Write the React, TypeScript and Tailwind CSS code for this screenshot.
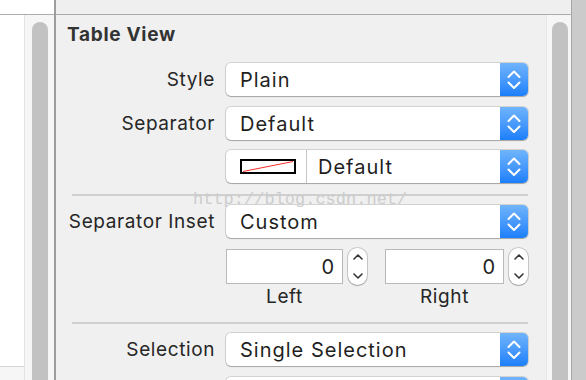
import type { ReactNode } from 'react';

function Chevrons() {
  return (
    <svg width="14" height="22" viewBox="0 0 14 22" fill="none">
      <polyline points="1.5,8 7,2.5 12.5,8" stroke="white" strokeWidth="2" strokeLinecap="round" strokeLinejoin="round" />
      <polyline points="1.5,13.5 7,19 12.5,13.5" stroke="white" strokeWidth="2" strokeLinecap="round" strokeLinejoin="round" />
    </svg>
  );
}

function Popup({ children, plain = true }: { children: ReactNode; plain?: boolean }) {
  return (
    <div className="flex h-[33px] w-full rounded-[5px] bg-white shadow-[0_0_0_1px_rgba(0,0,0,0.12),0_1px_1px_rgba(0,0,0,0.22)]">
      {plain ? (
        <div className="flex flex-1 items-center pl-[14px] text-[20px] tracking-[1px] text-[#1f1f1f]">{children}</div>
      ) : (
        <div className="flex flex-1 items-center">{children}</div>
      )}
      <div className="flex w-[28px] items-center justify-center rounded-r-[5px] bg-linear-to-b from-[#6fb4fb] to-[#1a7ffa]">
        <Chevrons />
      </div>
    </div>
  );
}

function Row({ label, children }: { label: string; children: ReactNode }) {
  return (
    <div className="grid grid-cols-[148px_302px] items-center gap-x-[11px]">
      <div className="whitespace-nowrap pt-px text-right text-[19px] leading-[24px] tracking-[0.6px] text-[#262626]">{label}</div>
      {children}
    </div>
  );
}

function Stepper() {
  return (
    <div className="flex h-[37px] w-[19px] flex-col items-center justify-between rounded-full bg-white py-[6px] shadow-[0_0_0_1px_rgba(0,0,0,0.16),0_1px_1px_rgba(0,0,0,0.2)]">
      <svg width="10" height="6" viewBox="0 0 10 6" fill="none">
        <polyline points="1,5 5,1 9,5" stroke="#333" strokeWidth="1.6" strokeLinecap="round" strokeLinejoin="round" />
      </svg>
      <svg width="10" height="6" viewBox="0 0 10 6" fill="none">
        <polyline points="1,1 5,5 9,1" stroke="#333" strokeWidth="1.6" strokeLinecap="round" strokeLinejoin="round" />
      </svg>
    </div>
  );
}

function NumberField({ label }: { label: string }) {
  return (
    <div className="flex flex-col">
      <div className="flex items-center gap-[5px]">
        <div className="flex h-[35px] flex-1 items-center justify-end border border-[#b9b9b9] bg-white pr-[8px] text-[20px] text-[#1f1f1f]">
          0
        </div>
        <Stepper />
      </div>
      <div className="pr-[24px] text-center text-[19px] leading-[24px] tracking-[0.6px] text-[#262626]">{label}</div>
    </div>
  );
}

function ScrollStrip({ side }: { side: 'left' | 'right' }) {
  return (
    <div
      className={`flex h-full shrink-0 bg-[#f6f6f6] pt-[7px] ${
        side === 'left' ? 'w-[30px] border-l border-[#e4e4e4] pl-[7px]' : 'w-[25px] border-l border-[#e6e6e6] pl-[5px]'
      }`}
    >
      <div className="h-full w-[16px] rounded-t-full bg-[#c2c2c2]" />
    </div>
  );
}

export default function App() {
  return (
    <div
      className="relative flex h-[380px] w-[586px] overflow-hidden bg-[#f0f0f0]"
      style={{ fontFamily: 'Inter, "Noto Sans", "Liberation Sans", sans-serif' }}
    >
      {/* left column */}
      <div className="flex w-[54px] shrink-0 flex-col bg-white">
        <div className="h-[14px] shrink-0 bg-white" />
        <div className="h-px shrink-0 bg-[#acacac]" />
        <div className="flex min-h-0 flex-1">
          <div className="flex w-[24px] shrink-0 flex-col">
            <div className="h-[351px] shrink-0 bg-white" />
            <div className="h-px shrink-0 bg-[#d6d6d6]" />
            <div className="flex-1 bg-[#f6f6f6]" />
          </div>
          <ScrollStrip side="left" />
        </div>
      </div>
      <div className="w-[2px] shrink-0 bg-[#9d9d9d]" />

      {/* inspector */}
      <div className="flex w-[515px] shrink-0 flex-col">
        <div className="h-[14px] shrink-0 bg-[#efefef]" />
        <div className="h-px shrink-0 bg-[#acacac]" />
        <div className="flex min-h-0 flex-1 overflow-hidden">
          <div className="flex w-[490px] shrink-0 flex-col pl-[11px] pr-[18px] pt-[8px]">
            <div className="text-[19px] font-bold leading-[24px] tracking-[0.7px] text-[#333]">Table View</div>

            <div className="mt-[16px]">
              <Row label="Style">
                <Popup>Plain</Popup>
              </Row>
            </div>
            <div className="mt-[11px]">
              <Row label="Separator">
                <Popup>Default</Popup>
              </Row>
            </div>
            <div className="mt-[10px]">
              <Row label="">
                <Popup plain={false}>
                  <div className="flex h-full w-[81px] items-center border-r border-[#c6c6c6] pl-[14px]">
                    <div className="relative h-[15px] w-[56px] border-2 border-black">
                      <svg className="absolute inset-0" width="52" height="11" viewBox="0 0 52 11">
                        <line x1="1" y1="10.5" x2="51" y2="0.5" stroke="#ff2a2a" strokeWidth="1" />
                      </svg>
                    </div>
                  </div>
                  <div className="pl-[11px] text-[20px] tracking-[1px] text-[#1f1f1f]">Default</div>
                </Popup>
              </Row>
            </div>

            <div className="ml-[5px] mt-[11px] h-[2px] shrink-0 bg-[#cfcfcf]" />

            <div className="mt-[9px]">
              <Row label="Separator Inset">
                <Popup>Custom</Popup>
              </Row>
            </div>
            <div className="mt-[10px]">
              <Row label="">
                <div className="grid grid-cols-[141px_143px] gap-x-[18px]">
                  <NumberField label="Left" />
                  <NumberField label="Right" />
                </div>
              </Row>
            </div>

            <div className="ml-[5px] mt-[13px] h-[2px] shrink-0 bg-[#cfcfcf]" />

            <div className="mt-[9px]">
              <Row label="Selection">
                <Popup>Single Selection</Popup>
              </Row>
            </div>
            <div className="mt-[11px]">
              <Row label="">
                <Popup>{''}</Popup>
              </Row>
            </div>
          </div>
          <ScrollStrip side="right" />
        </div>
      </div>
      <div className="w-px shrink-0 bg-[#a6a6a6]" />
      <div className="flex-1 bg-[#cbcbcb]" />

      {/* watermark */}
      <div
        className="pointer-events-none absolute left-[193px] top-[189px] text-[17px] leading-[22px] text-[#cdcdcd]"
        style={{ fontFamily: '"Liberation Mono", monospace' }}
      >
        http://blog.csdn.net/
      </div>
    </div>
  );
}
